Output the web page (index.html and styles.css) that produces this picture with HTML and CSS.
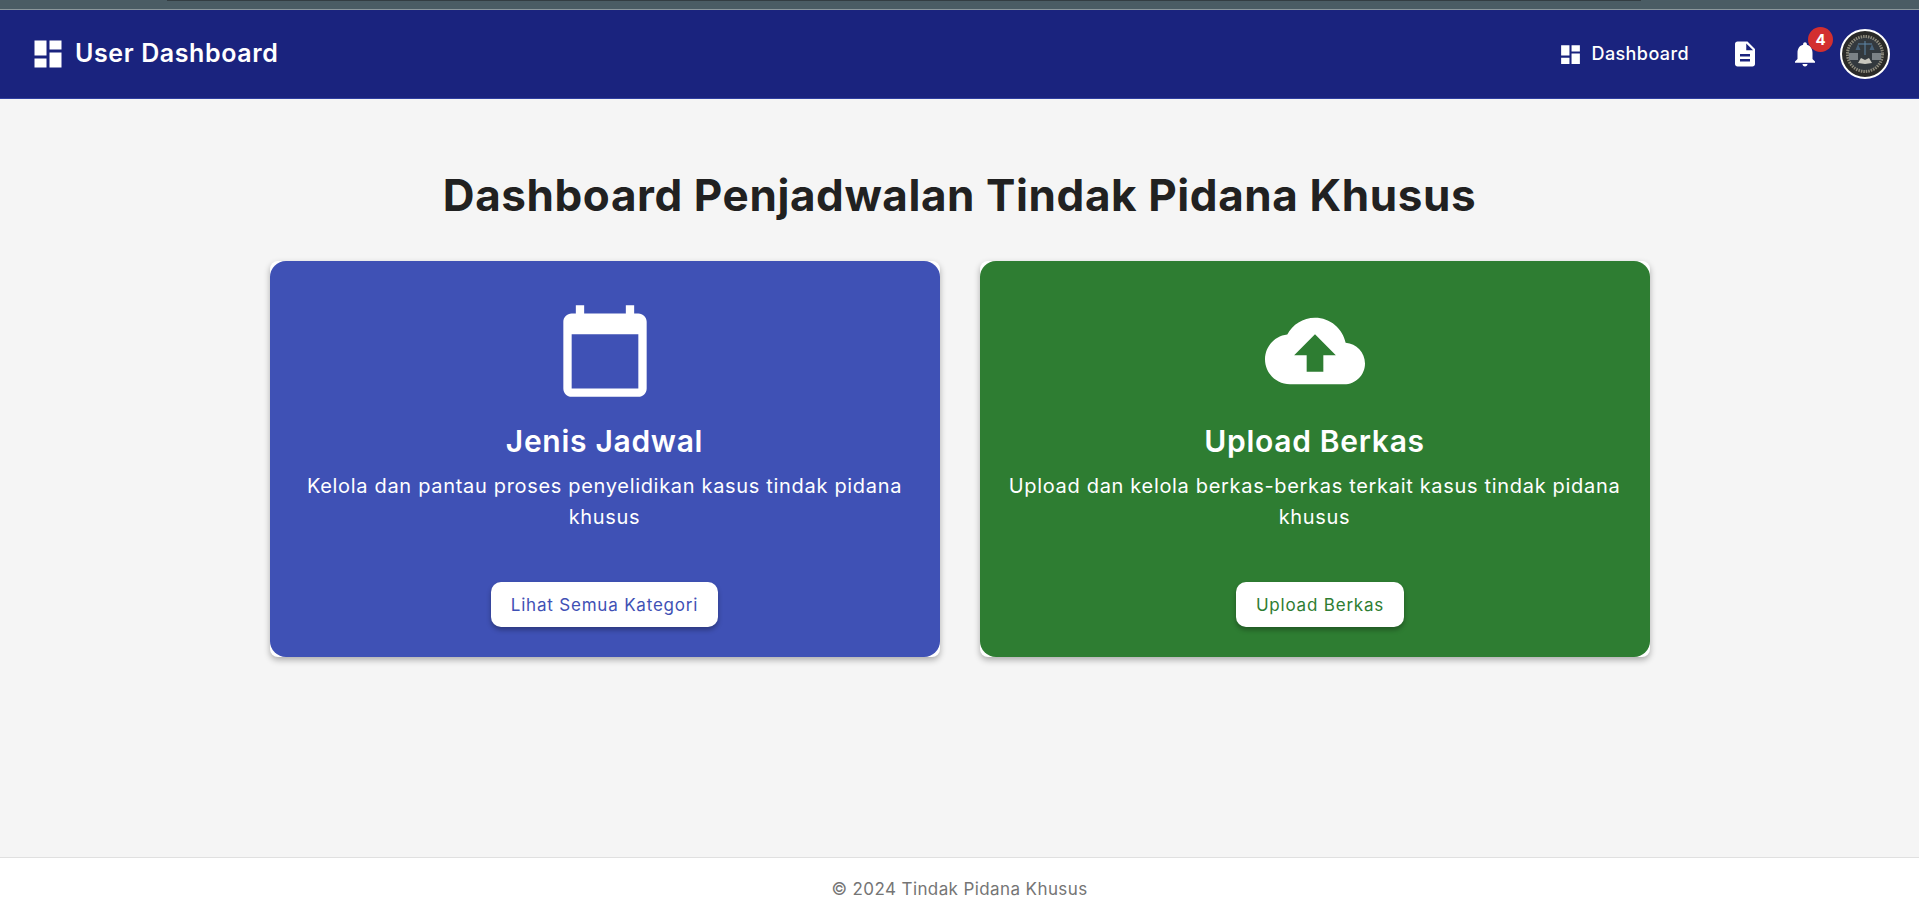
FILE: index.html
```html
<!DOCTYPE html>
<html lang="en">

<head>
    <meta charset="UTF-8">
    <meta name="viewport" content="width=device-width, initial-scale=1.0">
    <title>User Dashboard</title>
    <link rel="stylesheet" href="styles.css">
</head>

<body>
    <div class="topstrip"><div class="topline"></div></div>

    <nav class="navbar">
        <div class="brand">
            <svg class="brand-icon" viewBox="0 0 24 24"><path d="M3 13h8V3H3v10zm0 8h8v-6H3v6zm10 0h8V11h-8v10zm0-18v6h8V3h-8z"/></svg>
            <span class="navtext">User Dashboard</span>
        </div>
        <div class="navright">
            <a class="navlink">
                <svg class="nav-icon" viewBox="0 0 24 24"><path d="M3 13h8V3H3v10zm0 8h8v-6H3v6zm10 0h8V11h-8v10zm0-18v6h8V3h-8z"/></svg>
                <span class="navtext">Dashboard</span>
            </a>
            <svg class="doc-icon" viewBox="0 0 24 24"><path d="M14 2H6c-1.1 0-1.99.9-1.99 2L4 20c0 1.1.89 2 1.99 2H18c1.1 0 2-.9 2-2V8l-6-6zm2 16H8v-2h8v2zm0-4H8v-2h8v2zm-3-5V3.5L18.5 9H13z"/></svg>
            <div class="bell">
                <svg class="bell-icon" viewBox="0 0 24 24"><path d="M12 22c1.1 0 2-.9 2-2h-4c0 1.1.89 2 2 2zm6-6v-5c0-3.07-1.64-5.64-4.5-6.32V4c0-.83-.67-1.5-1.5-1.5s-1.5.67-1.5 1.5v.68C7.63 5.36 6 7.92 6 11v5l-2 2v1h16v-1l-2-2z"/></svg>
                <span class="badge">4</span>
            </div>
            <!-- seal photo redrawn with simple shapes -->
            <svg class="avatar" viewBox="0 0 50 50">
                <circle cx="25" cy="25" r="24" fill="#2a2a28" stroke="#fff" stroke-width="2"/>
                <circle cx="25" cy="25" r="17.500" fill="#33393e" stroke="#8d8a7c" stroke-width="3" stroke-dasharray="1.500 1"/>
                <path d="M25 12v14M18 15h14" stroke="#5f87a8" stroke-width="1" fill="none"/>
                <path d="M18 15l-2.500 6h5zM32 15l-2.500 6h5z" fill="#47627a"/>
                <rect x="9" y="24" width="9" height="7" fill="#7c8286"/>
                <rect x="32" y="24" width="9" height="7" fill="#7c8286"/>
                <path d="M18 34l3-5 4 2 4-2 3 5-7 1z" fill="#c9c7be"/>
            </svg>
        </div>
    </nav>

    <main class="content">
        <h1>Dashboard Penjadwalan Tindak Pidana Khusus</h1>
        <div class="cards">
            <div class="card">
                <div class="card-inner card-blue">
                    <svg class="card-icon" viewBox="0 0 24 24"><path d="M20 3h-1V1h-2v2H7V1H5v2H4c-1.1 0-2 .9-2 2v16c0 1.1.9 2 2 2h16c1.1 0 2-.9 2-2V5c0-1.1-.9-2-2-2zm0 18H4V8h16v13z"/></svg>
                    <h2>Jenis Jadwal</h2>
                    <p>Kelola dan pantau proses penyelidikan kasus tindak pidana khusus</p>
                    <button class="btn btn-blue">Lihat Semua Kategori</button>
                </div>
            </div>
            <div class="card">
                <div class="card-inner card-green">
                    <svg class="card-icon" viewBox="0 0 24 24"><path d="M19.35 10.04C18.67 6.59 15.64 4 12 4 9.11 4 6.6 5.64 5.35 8.04 2.34 8.36 0 10.91 0 14c0 3.31 2.69 6 6 6h13c2.76 0 5-2.24 5-5 0-2.64-2.05-4.78-4.65-4.96zM14 13v4h-4v-4H7l5-5 5 5h-3z"/></svg>
                    <h2>Upload Berkas</h2>
                    <p>Upload dan kelola berkas-berkas terkait kasus tindak pidana khusus</p>
                    <button class="btn btn-green">Upload Berkas</button>
                </div>
            </div>
        </div>
    </main>

    <footer class="footer">© 2024 Tindak Pidana Khusus</footer>
</body>

</html>
```

FILE: styles.css
```css
* {
    box-sizing: border-box;
}

body {
    margin: 0;
    height: 919px;
    display: flex;
    flex-direction: column;
    background-color: #f5f5f5;
    font-family: Inter, "Noto Sans", sans-serif;
    overflow: hidden;
}

.topstrip {
    height: 10px;
    background-color: #4a5c64;
    border-bottom: 1px solid #8b979b;
}

.topline {
    height: 1px;
    margin-left: 167px;
    margin-right: 278px;
    background-color: #333d42;
}

.navbar {
    height: 89px;
    display: flex;
    align-items: center;
    justify-content: space-between;
    padding: 0 29px 0 30px;
    background-color: #1a237e;
    border-bottom: 1px solid #303f9f;
    color: #fff;
}

.navbar svg {
    fill: #fff;
}

.navtext {
    padding-bottom: 2px;
}

.brand {
    display: flex;
    align-items: center;
    gap: 9px;
    font-size: 25px;
    font-weight: 600;
    letter-spacing: 0.6px;
}

.brand-icon {
    width: 36px;
    height: 36px;
}

.navright {
    display: flex;
    align-items: center;
}

.navlink {
    display: flex;
    align-items: center;
    gap: 9px;
    font-size: 18px;
    font-weight: 500;
    letter-spacing: 0.4px;
}

.nav-icon {
    width: 25px;
    height: 25px;
}

.doc-icon {
    width: 30px;
    height: 30px;
    margin-left: 41px;
}

.bell {
    position: relative;
    display: flex;
    margin-left: 30px;
    margin-right: 20px;
}

.bell-icon {
    width: 30px;
    height: 30px;
}

.badge {
    position: absolute;
    top: -12px;
    right: -13px;
    width: 25px;
    height: 25px;
    border-radius: 50%;
    background-color: #d32f2f;
    font-size: 15px;
    font-weight: 700;
    line-height: 25px;
    text-align: center;
}

.avatar {
    width: 50px;
    height: 50px;
}

.content {
    flex: 1;
    padding-top: 69px;
}

h1 {
    margin: 0 0 39px;
    font-size: 44px;
    line-height: 54px;
    font-weight: 700;
    letter-spacing: 0.6px;
    color: #212121;
    text-align: center;
}

.cards {
    display: flex;
    justify-content: center;
    gap: 40px;
}

.card {
    width: 670px;
    height: 396px;
    border-radius: 8px;
    background-color: #fff;
    box-shadow: 0 3px 6px rgba(0, 0, 0, 0.3);
}

.card-inner {
    height: 100%;
    padding: 40px 24px 30px;
    display: flex;
    flex-direction: column;
    align-items: center;
    border-radius: 16px;
    color: #fff;
    text-align: center;
}

.card-blue {
    background-color: #3f51b5;
}

.card-green {
    background-color: #2e7d32;
}

.card-icon {
    width: 100px;
    height: 100px;
    fill: #fff;
    flex: none;
}

h2 {
    margin: 20px 0 10px;
    font-size: 30px;
    line-height: 40px;
    font-weight: 600;
    letter-spacing: 0.7px;
}

p {
    margin: 0;
    font-size: 20px;
    line-height: 31px;
    letter-spacing: 0.68px;
}

.btn {
    margin-top: auto;
    height: 45px;
    padding: 0 20px;
    border: none;
    border-radius: 10px;
    background-color: #fff;
    box-shadow: 0 3px 5px rgba(0, 0, 0, 0.3);
    font-family: inherit;
    font-size: 17px;
    font-weight: 400;
    letter-spacing: 0.8px;
}

.btn-blue {
    color: #3f51b5;
}

.btn-green {
    margin-left: 11px;
    color: #2e7d32;
}

.footer {
    height: 62px;
    padding-top: 21px;
    border-top: 1px solid #e0e0e0;
    background-color: #fff;
    color: #757575;
    font-size: 17px;
    letter-spacing: 0.4px;
    text-align: center;
}
```
